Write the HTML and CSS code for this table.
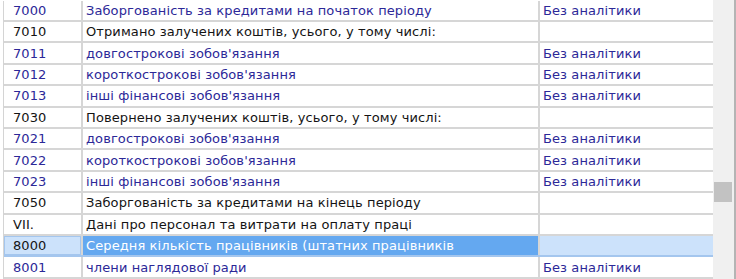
FILE: index.html
```html
<!DOCTYPE html>
<html lang="uk">
<head>
<meta charset="utf-8">
<link rel="stylesheet" href="styles.css">
</head>
<body>
<div class="frame">
  <div class="grid">
    <div class="row blue"><div class="c code">7000</div><div class="c name">Заборгованість за кредитами на початок періоду</div><div class="c an">Без аналітики</div></div>
    <div class="row"><div class="c code">7010</div><div class="c name">Отримано залучених коштів, усього, у тому числі:</div><div class="c an"></div></div>
    <div class="row blue"><div class="c code">7011</div><div class="c name">довгострокові зобов'язання</div><div class="c an">Без аналітики</div></div>
    <div class="row blue"><div class="c code">7012</div><div class="c name">короткострокові зобов'язання</div><div class="c an">Без аналітики</div></div>
    <div class="row blue"><div class="c code">7013</div><div class="c name">інші фінансові зобов'язання</div><div class="c an">Без аналітики</div></div>
    <div class="row"><div class="c code">7030</div><div class="c name">Повернено залучених коштів, усього, у тому числі:</div><div class="c an"></div></div>
    <div class="row blue"><div class="c code">7021</div><div class="c name">довгострокові зобов'язання</div><div class="c an">Без аналітики</div></div>
    <div class="row blue"><div class="c code">7022</div><div class="c name">короткострокові зобов'язання</div><div class="c an">Без аналітики</div></div>
    <div class="row blue"><div class="c code">7023</div><div class="c name">інші фінансові зобов'язання</div><div class="c an">Без аналітики</div></div>
    <div class="row"><div class="c code">7050</div><div class="c name">Заборгованість за кредитами на кінець періоду</div><div class="c an"></div></div>
    <div class="row"><div class="c code">VII.</div><div class="c name">Дані про персонал та витрати на оплату праці</div><div class="c an"></div></div>
    <div class="row sel"><div class="c code">8000</div><div class="c name">Середня кількість працівників (штатних працівників</div><div class="c an"></div></div>
    <div class="row blue"><div class="c code">8001</div><div class="c name">члени наглядової ради</div><div class="c an">Без аналітики</div></div>
  </div>
  <div class="scroll"><div class="thumb"></div></div>
</div>
</body>
</html>
```
FILE: styles.css
```css
html, body {
  margin: 0;
  padding: 0;
  background: #ffffff;
  overflow: hidden;
}
.frame {
  display: flex;
  width: 736px;
  height: 279px;
  overflow: hidden;
  font-family: "DejaVu Sans", Verdana, sans-serif;
  font-size: 13px;
  letter-spacing: 0.1px;
}
.grid {
  margin-left: 3px;
  width: 710px;
  border-left: 1px solid #d4d4d4;
  display: flex;
  flex-direction: column;
  margin-top: 0.5px;
}
.row {
  display: grid;
  grid-template-columns: 77px 457px 175px;
  height: 21.42px;
  flex: 0 0 21.42px;
  box-sizing: border-box;
  border-bottom: 2px solid #d6d6d6;
  color: #141414;
}
.row.blue { color: #2c2898; }
.c {
  display: flex;
  align-items: center;
  padding-left: 3px;
  white-space: nowrap;
  overflow: hidden;
}
.c + .c {
  border-left: 2px solid #d6d6d6;
}
.code { padding-left: 9px; }
.row.sel {
  border-bottom-color: #a4c6ee;
}
.row.sel .code {
  background: #cce2fb;
  color: #141414;
  box-shadow: inset 0 0 0 1px #a4c6ee;
}
.row.sel .name {
  background: #64a8f0;
  color: #ffffff;
}
.row.sel .an {
  background: #cce2fb;
}
.scroll {
  width: 21px;
  background: #f0f0f0;
  border-right: 2px solid #b4b4b4;
  position: relative;
  margin-left: auto;
}
.thumb {
  position: absolute;
  left: 1px;
  top: 182px;
  width: 18px;
  height: 20px;
  background: #c2c2c2;
}
```
